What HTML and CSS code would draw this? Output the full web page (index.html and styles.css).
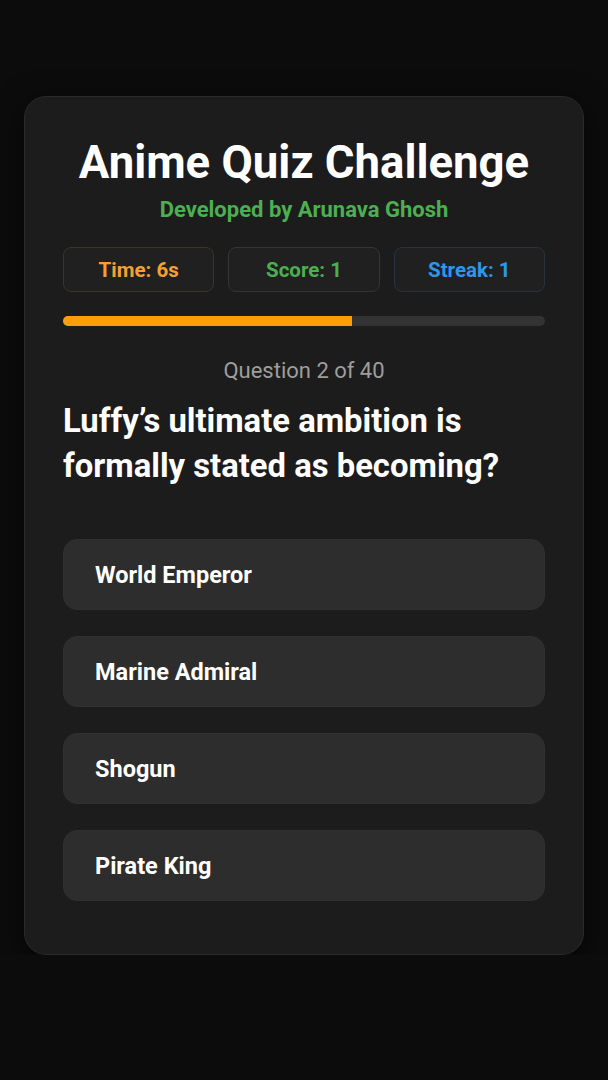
FILE: index.html
```html
<!DOCTYPE html>
<html lang="en">
<head>
    <meta charset="UTF-8" />
    <title>Anime Quiz Challenge</title>
    <link rel="stylesheet" href="styles.css">
</head>
<body>
    <div class="quiz">
        <h1 class="title">Anime Quiz Challenge</h1>
        <p class="credit">Developed by Arunava Ghosh</p>

        <div class="stats">
            <div class="stat time">Time: 6s</div>
            <div class="stat score">Score: 1</div>
            <div class="stat streak">Streak: 1</div>
        </div>

        <div class="bar"><div class="fill" style="width:60%"></div></div>

        <p class="counter">Question 2 of 40</p>
        <h2 class="question">Luffy’s ultimate ambition is formally stated as becoming?</h2>

        <div class="options">
            <button class="option">World Emperor</button>
            <button class="option">Marine Admiral</button>
            <button class="option">Shogun</button>
            <button class="option">Pirate King</button>
        </div>
    </div>
</body>
</html>
```

FILE: styles.css
```css
*{margin:0;padding:0;box-sizing:border-box;}
body{
    background:#0c0c0c;
    font-family:Roboto,"Liberation Sans",sans-serif;
    color:#fff;
    display:flex;
    justify-content:center;
    padding-top:96px;
}
.quiz{
    width:560px;
    background:#1c1c1c;
    border:1px solid #2a2a2a;
    border-radius:22px;
    padding:38px 38px 53px;
    box-shadow:0 8px 30px rgba(0,0,0,.6);
}
.title{
    text-align:center;
    font-size:45.5px;
    font-weight:700;
    line-height:56px;
}
.credit{
    text-align:center;
    color:#4caf50;
    font-size:22px;
    font-weight:700;
    margin-top:6px;
}
.stats{
    display:grid;
    grid-template-columns:repeat(3,1fr);
    gap:14px;
    margin-top:25px;
}
.stat{
    height:45px;
    display:flex;
    align-items:center;
    justify-content:center;
    background:#202020;
    border:1px solid #333;
    border-radius:8px;
    font-size:20.5px;
    font-weight:700;
}
.stat.time{color:#f5a030;border-color:#3f3322;}
.stat.score{color:#4caf50;border-color:#323632;}
.stat.streak{color:#2e97e8;border-color:#28333d;}
.bar{
    height:10px;
    background:#333;
    border-radius:5px;
    margin-top:24px;
    overflow:hidden;
}
.bar .fill{height:100%;background:#ff9c0a;}
.counter{
    text-align:center;
    color:#9e9e9e;
    font-size:22px;
    margin-top:32px;
}
.question{
    font-size:32.8px;
    font-weight:700;
    line-height:45px;
    margin-top:16px;
}
.options{
    display:flex;
    flex-direction:column;
    gap:26px;
    margin-top:50px;
}
.option{
    height:71px;
    text-align:left;
    padding:0 31px;
    background:#2d2d2d;
    border:1px solid #303030;
    border-radius:14px;
    color:#fff;
    font-family:inherit;
    font-size:23.5px;
    font-weight:700;
}
```
